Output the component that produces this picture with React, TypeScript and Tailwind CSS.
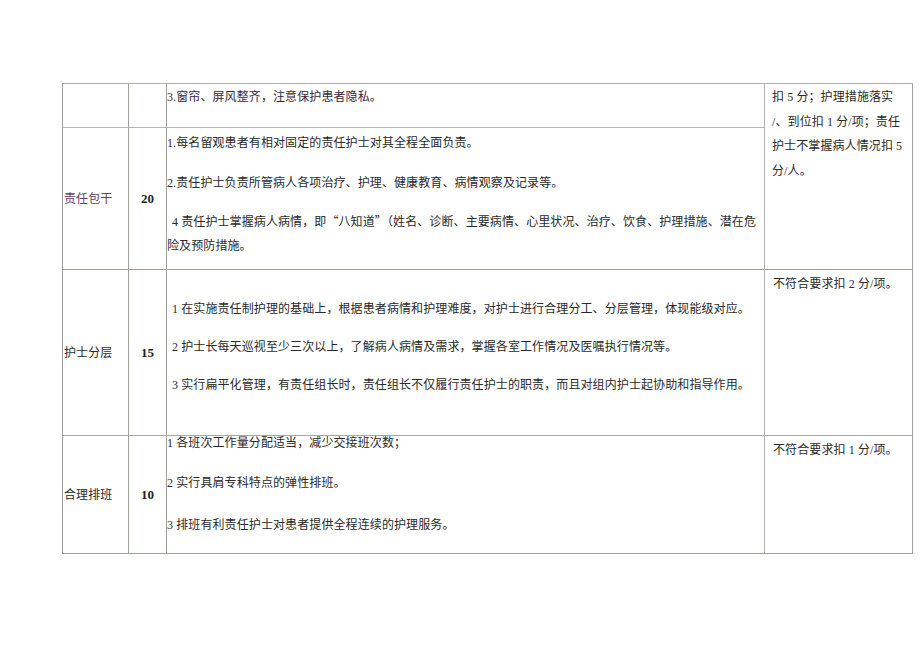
import React from "react";

const font = {
  fontFamily: '"Liberation Serif", "Noto Sans CJK SC", serif',
};

export default function App() {
  const cell = "border-r border-b border-[#9aa394]";
  return (
    <div className="w-[920px] h-[650px] bg-white text-[#2a2a2a]" style={font}>
      <div className="pt-[83px] pl-[62px]">
        <div className="grid grid-cols-[66px_38px_598px_148px] grid-rows-[44px_142px_166px_118px] w-[851px] border-l border-t border-l-[#9aa394] border-t-[#b0b0b0] text-[12px] tracking-[0.1px]">
          {/* Row 1 */}
          <div className={`${cell} border-b-[#bfb0bf]`} />
          <div className={`${cell} border-b-[#bfb0bf]`} />
          <div className={`${cell} border-b-[#bfb0bf] border-r-[#b0b0b0] pt-[3px]`}>
            <p className="leading-[20px] text-[#3a2a3a]">3.窗帘、屏风整齐，注意保护患者隐私。</p>
          </div>
          <div className="row-span-2 border-r border-b border-r-[#a0a0a0] border-b-[#9aa394] pt-[1px] pl-[7px] leading-[24.5px]">
            <p>扣 5 分；护理措施落实</p>
            <p>/、到位扣 1 分/项；责任</p>
            <p>护士不掌握病人情况扣 5</p>
            <p>分/人。</p>
          </div>

          {/* Row 2 */}
          <div className={`${cell} flex items-center pl-[1px] text-[#6a3d6a]`}>责任包干</div>
          <div className={`${cell} flex items-center justify-center font-bold text-[13px] text-[#222]`}>20</div>
          <div className={`${cell} border-r-[#b0b0b0] pt-[3px]`}>
            <p className="leading-[24px]">1.每名留观患者有相对固定的责任护士对其全程全面负责。</p>
            <p className="leading-[24px] mt-[16px]">2.责任护士负责所管病人各项治疗、护理、健康教育、病情观察及记录等。</p>
            <p className="leading-[24px] mt-[14px] pl-[5px]">
              4 责任护士掌握病人病情，即
              <span className="font-['Noto_Sans_CJK_SC',sans-serif]">“</span>八知道
              <span className="font-['Noto_Sans_CJK_SC',sans-serif]">”（</span>
              姓名、诊断、主要病情、心里状况、治疗、饮食、护理措施、潜在危
            </p>
            <p className="leading-[24px]">险及预防措施。</p>
          </div>

          {/* Row 3 */}
          <div className={`${cell} border-b-[#a8a8a8] flex items-center pl-[1px]`}>护士分层</div>
          <div className={`${cell} border-b-[#a8a8a8] flex items-center justify-center font-bold text-[13px] text-[#222]`}>15</div>
          <div className={`${cell} border-b-[#a8a8a8] border-r-[#b0b0b0] pt-[27px] pl-[5px]`}>
            <p className="leading-[24px]">1 在实施责任制护理的基础上，根据患者病情和护理难度，对护士进行合理分工、分层管理，体现能级对应。</p>
            <p className="leading-[24px] mt-[14px]">2 护士长每天巡视至少三次以上，了解病人病情及需求，掌握各室工作情况及医嘱执行情况等。</p>
            <p className="leading-[24px] mt-[14px]">3 实行扁平化管理，有责任组长时，责任组长不仅履行责任护士的职责，而且对组内护士起协助和指导作用。</p>
          </div>
          <div className="border-r border-b border-r-[#a0a0a0] border-b-[#a8a8a8] pt-[4px] pl-[8px]">
            <p className="leading-[20px]">不符合要求扣 2 分/项。</p>
          </div>

          {/* Row 4 */}
          <div className={`${cell} flex items-center pl-[1px]`}>合理排班</div>
          <div className={`${cell} flex items-center justify-center font-bold text-[13px] text-[#222]`}>10</div>
          <div className={`${cell} border-r-[#b0b0b0]`}>
            <p className="leading-[14px]">1 各班次工作量分配适当，减少交接班次数；</p>
            <p className="leading-[14px] mt-[26px]">2 实行具肩专科特点的弹性排班。</p>
            <p className="leading-[14px] mt-[28px]">3 排班有利责任护士对患者提供全程连续的护理服务。</p>
          </div>
          <div className="border-r border-b border-r-[#a0a0a0] border-b-[#9aa394] pt-[4px] pl-[8px]">
            <p className="leading-[20px]">不符合要求扣 1 分/项。</p>
          </div>
        </div>
      </div>
    </div>
  );
}
